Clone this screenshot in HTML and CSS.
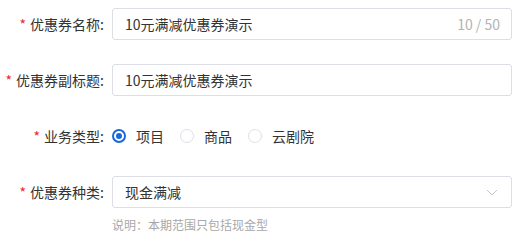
FILE: index.html
```html
<!DOCTYPE html>
<html lang="zh-CN">
<head>
<meta charset="utf-8">
<link rel="stylesheet" href="styles.css">
</head>
<body>
<form class="form">
  <div class="item">
    <label class="label required">优惠券名称:</label>
    <div class="control">
      <div class="input">
        <span class="value">10元满减优惠券演示</span>
        <span class="count">10 / 50</span>
      </div>
    </div>
  </div>
  <div class="item">
    <label class="label required">优惠券副标题:</label>
    <div class="control">
      <div class="input"><span class="value">10元满减优惠券演示</span></div>
    </div>
  </div>
  <div class="item">
    <label class="label required">业务类型:</label>
    <div class="control radios">
      <span class="radio checked"><span class="dot"></span><span class="rtext">项目</span></span>
      <span class="radio"><span class="dot"></span><span class="rtext">商品</span></span>
      <span class="radio"><span class="dot"></span><span class="rtext">云剧院</span></span>
    </div>
  </div>
  <div class="item last">
    <label class="label required">优惠券种类:</label>
    <div class="control">
      <div class="input select">
        <span class="value">现金满减</span>
        <svg class="arrow" width="12" height="12" viewBox="0 0 12 12"><path d="M1 4 L6 9 L11 4" fill="none" stroke="#c0c4cc" stroke-width="1"/></svg>
      </div>
      <div class="help">说明：本期范围只包括现金型</div>
    </div>
  </div>
</form>
</body>
</html>
```

FILE: styles.css
```css
* { box-sizing: border-box; }
html, body { margin: 0; padding: 0; background: #fff; }
body {
  font-family: "Noto Sans CJK SC", "Noto Sans", sans-serif;
  font-size: 14px;
  color: #333;
}
.form { padding: 8px 8px 0 0; }
.item {
  display: grid;
  grid-template-columns: 112px 400px;
  margin-bottom: 24px;
}
.item.last { margin-bottom: 0; }
.label {
  height: 32px;
  line-height: 32px;
  text-align: right;
  padding-right: 8px;
  color: #333;
  white-space: nowrap;
}
.label.required::before {
  content: "*";
  color: #f5222d;
  margin-right: 4px;
}
.input {
  height: 32px;
  border: 1px solid #dcdfe6;
  border-radius: 3px;
  display: flex;
  align-items: center;
  justify-content: space-between;
  padding: 0 11px 0 12px;
}
.value { color: #333; }
.count { color: #b3b3b3; font-size: 14px; }
.arrow { margin-right: 2px; }
.radios {
  display: flex;
  align-items: center;
  height: 32px;
}
.radio {
  display: flex;
  align-items: center;
  margin-right: 16px;
}
.dot {
  width: 14px;
  height: 14px;
  border: 1px solid #dcdfe6;
  border-radius: 50%;
  position: relative;
}
.radio.checked .dot { border: 2px solid #1668dc; }
.radio.checked .dot::after {
  content: "";
  position: absolute;
  left: 2px; top: 2px;
  width: 6px; height: 6px;
  border-radius: 50%;
  background: #1668dc;
}
.rtext { margin-left: 10px; }
.help {
  font-size: 12px;
  color: #a8a8a8;
  line-height: 16px;
  margin-top: 9px;
}
```
